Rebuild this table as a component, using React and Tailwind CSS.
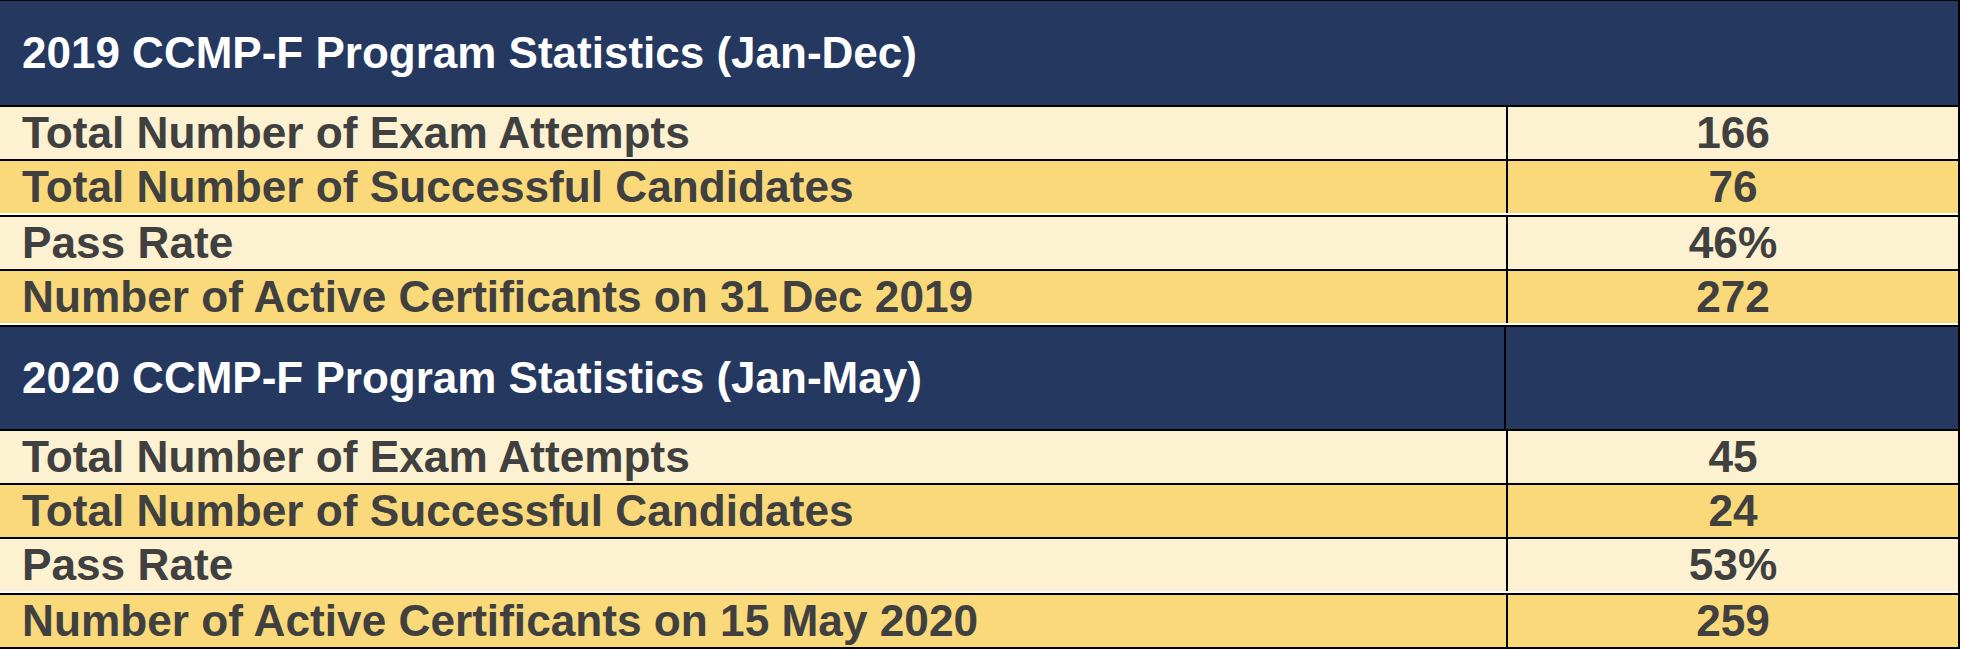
const sections = [
  {
    title: '2019 CCMP-F Program Statistics (Jan-Dec)',
    split: false,
    rows: [
      { label: 'Total Number of Exam Attempts', value: '166' },
      { label: 'Total Number of Successful Candidates', value: '76', gap: true },
      { label: 'Pass Rate', value: '46%' },
      { label: 'Number of Active Certificants on 31 Dec 2019', value: '272', gap: true },
    ],
  },
  {
    title: '2020 CCMP-F Program Statistics (Jan-May)',
    split: true,
    rows: [
      { label: 'Total Number of Exam Attempts', value: '45' },
      { label: 'Total Number of Successful Candidates', value: '24' },
      { label: 'Pass Rate', value: '53%', gap: true },
      { label: 'Number of Active Certificants on 15 May 2020', value: '259' },
    ],
  },
];

const Row = ({ label, value, index, gap }) => {
  const bg = index % 2 === 0 ? 'bg-[#fcf1d0]' : 'bg-[#f9d979]';
  return (
    <div className={`flex text-[44.2px] ${gap ? 'border-b-2 border-white' : ''}`}>
      <div className={`w-[1506px] h-[52px] flex items-center pl-[22px] ${bg}`}>
        {label}
      </div>
      <div className={`flex-1 h-[52px] flex items-center justify-center border-l-2 border-black ${bg}`}>
        {value}
      </div>
    </div>
  );
};

const App = () => {
  return (
    <div className="w-[1962px] h-[650px] bg-white overflow-hidden">
      <div
        className="w-[1960px] border-t border-r-2 border-b-2 border-black bg-black flex flex-col gap-[2px] font-bold leading-none text-[#404040]"
        style={{ fontFamily: '"Liberation Sans", Arial, sans-serif' }}
      >
        {sections.map((s, si) => (
          <div key={si} className="flex flex-col gap-[2px]">
            <div className={`flex bg-[#25385f] text-white text-[44px] ${si === 0 ? 'h-[104px]' : 'h-[102px]'}`}>
              <div className={`flex items-center pl-[22px] ${s.split ? 'w-[1506px] border-r-2 border-black' : 'flex-1'}`}>
                {s.title}
              </div>
              {s.split && <div className="flex-1" />}
            </div>
            {s.rows.map((r, i) => (
              <Row key={i} index={i} {...r} />
            ))}
          </div>
        ))}
      </div>
    </div>
  );
};

export default App;
